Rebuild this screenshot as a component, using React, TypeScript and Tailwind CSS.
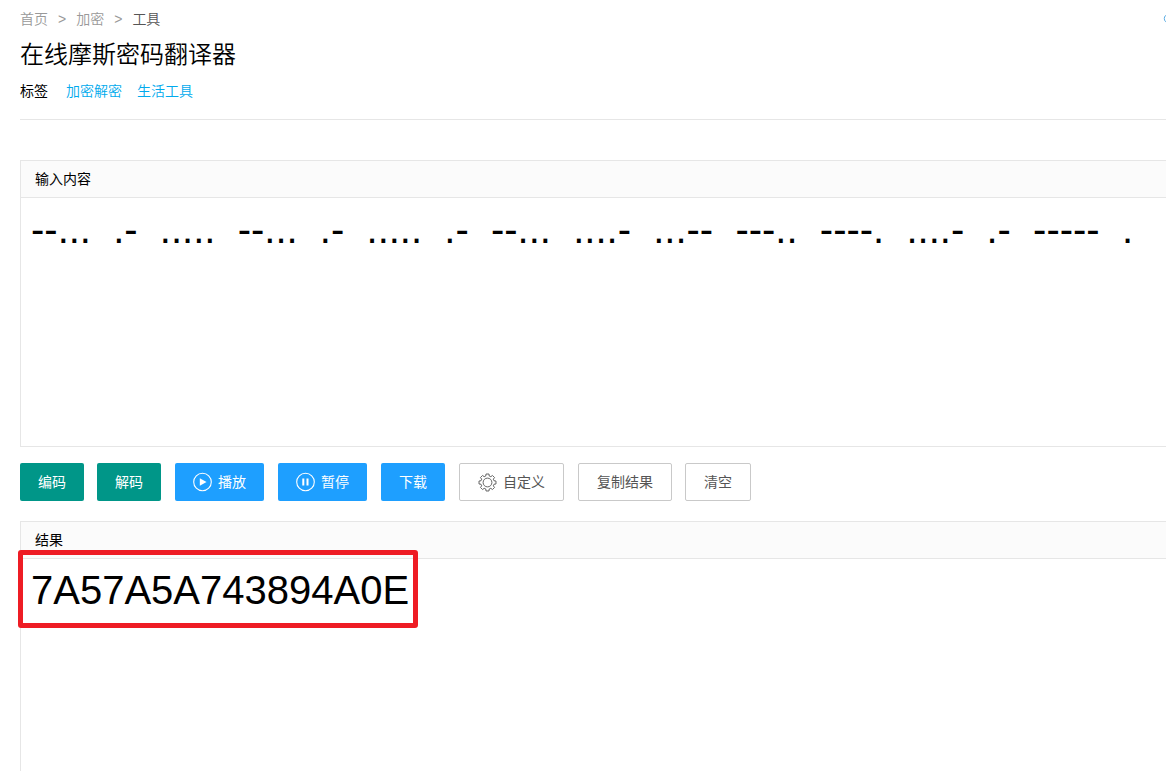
import React, { useState } from "react";

const MORSE =
  "--...  .-  .....  --...  .-  .....  .-  --...  ....-  ...--  ---..  ----.  ....-  .-  -----  .";

const baseBtn =
  "flex h-[38px] items-center justify-center whitespace-nowrap rounded-[2px] text-sm cursor-pointer";
const greenBtn = `${baseBtn} bg-[#009688] px-[18px] text-white hover:opacity-80`;
const blueBtn = `${baseBtn} bg-[#1E9FFF] px-[18px] text-white hover:opacity-80`;
const plainBtn = `${baseBtn} border border-[#C9C9C9] bg-white px-[18px] text-[#555] hover:border-[#009688]`;

function PlayIcon() {
  return (
    <svg viewBox="0 0 20 20" className="h-5 w-5" fill="none" aria-hidden="true">
      <circle cx="9.5" cy="10" r="8.8" stroke="currentColor" strokeWidth="1.1" />
      <path d="M6.8 6.3v7.4L13.6 10z" fill="currentColor" />
    </svg>
  );
}

function PauseIcon() {
  return (
    <svg viewBox="0 0 20 20" className="h-5 w-5" fill="none" aria-hidden="true">
      <circle cx="9.5" cy="10" r="8.8" stroke="currentColor" strokeWidth="1.1" />
      <path d="M6.3 6.4h2v7.2h-2zM10.5 6.4h2v7.2h-2z" fill="currentColor" />
    </svg>
  );
}

// outline of a cog with eight teeth
function cogPath() {
  let d = "";
  for (let i = 0; i < 8; i++) {
    const steps: [number, number][] = [
      [-15, 6.7],
      [-10, 8.6],
      [10, 8.6],
      [15, 6.7],
    ];
    steps.forEach(([offset, r]) => {
      const a = ((i * 45 + offset) * Math.PI) / 180;
      const x = (9.5 + r * Math.sin(a)).toFixed(2);
      const y = (10.5 - r * Math.cos(a)).toFixed(2);
      d += `${d ? "L" : "M"}${x} ${y}`;
    });
  }
  return d + "Z";
}

function CogIcon() {
  return (
    <svg viewBox="0 0 20 20" className="h-5 w-5" fill="none" stroke="currentColor" aria-hidden="true">
      <path d={cogPath()} strokeWidth="0.9" strokeLinejoin="round" />
      <circle cx="9.5" cy="10.5" r="4.4" strokeWidth="0.9" />
    </svg>
  );
}

function App() {
  const [input, setInput] = useState<string>(MORSE);
  const [result, setResult] = useState<string>("7A57A5A743894A0E");

  return (
    <div className="flex min-h-screen flex-col overflow-hidden bg-white pl-5 text-sm text-black font-['Liberation_Sans','Noto_Sans_CJK_SC',sans-serif]">
      {/* Page header */}
      <header className="border-b border-[#e6e6e6] pt-2 pb-[17px]">
        <div className="flex h-[22px] items-center justify-between">
          <nav className="flex items-center gap-[10px] font-[350] text-[#999]">
            <a href="#home">首页</a>
            <span>&gt;</span>
            <a href="#crypto">加密</a>
            <span>&gt;</span>
            <a href="#tools" className="text-[#555]">工具</a>
          </nav>
          <svg viewBox="0 0 12 12" className="-mr-2 h-[11px] w-[11px]" fill="none" aria-hidden="true">
            <circle cx="6" cy="5" r="4.6" stroke="#4aa3df" strokeWidth="1" />
          </svg>
        </div>
        <h1 className="mt-2 text-2xl leading-[34px] font-[350]">在线摩斯密码翻译器</h1>
        <div className="mt-2 flex h-[22px] items-center">
          <span>标签</span>
          <a href="#decrypt" className="ml-[18px] font-[350] text-[#01AAED]">加密解密</a>
          <a href="#life" className="ml-[15px] font-[350] text-[#01AAED]">生活工具</a>
        </div>
      </header>

      {/* Input */}
      <section className="mt-10 border border-r-0 border-[#e6e6e6]">
        <label htmlFor="source" className="block h-[37px] border-b border-[#e6e6e6] bg-[#FBFBFB] pl-[14px] leading-9">
          输入内容
        </label>
        <textarea
          id="source"
          value={input}
          onChange={(e) => setInput(e.target.value)}
          className="block h-[248px] w-full resize-none overflow-hidden pt-2 pl-[10px] text-[40px] leading-[46px] outline-none"
        />
      </section>

      {/* Buttons */}
      <div className="mt-4 flex flex-wrap gap-[14px]">
        <div className="flex gap-[13px]">
          <button type="button" className={greenBtn}>编码</button>
          <button type="button" className={greenBtn}>解码</button>
        </div>
        <div className="flex gap-[14px]">
          <button type="button" className={`${blueBtn} gap-[5px]`}>
            <PlayIcon />
            播放
          </button>
          <button type="button" className={`${blueBtn} gap-[5px]`}>
            <PauseIcon />
            暂停
          </button>
          <button type="button" className={blueBtn}>下载</button>
        </div>
        <button type="button" className={`${plainBtn} gap-[5px]`}>
          <CogIcon />
          自定义
        </button>
        <div className="flex gap-[13px]">
          <button type="button" className={plainBtn}>复制结果</button>
          <button
            type="button"
            className={plainBtn}
            onClick={() => {
              setInput("");
              setResult("");
            }}
          >
            清空
          </button>
        </div>
      </div>

      {/* Result */}
      <section className="relative mt-5 flex flex-1 flex-col border-t border-l border-[#e6e6e6]">
        <label htmlFor="result" className="block h-[37px] border-b border-[#e6e6e6] bg-[#FBFBFB] pl-[14px] leading-9">
          结果
        </label>
        <textarea
          id="result"
          value={result}
          onChange={(e) => setResult(e.target.value)}
          className="block w-full flex-1 resize-none overflow-hidden pt-2 pl-[10px] text-[40px] leading-[46px] outline-none"
        />
        {/* Red frame over the answer */}
        <div className="pointer-events-none absolute top-7 -left-[3px] h-[78px] w-[400px] rounded-[3px] border-5 border-[#EE1C24]" />
      </section>
    </div>
  );
}

export default App;
